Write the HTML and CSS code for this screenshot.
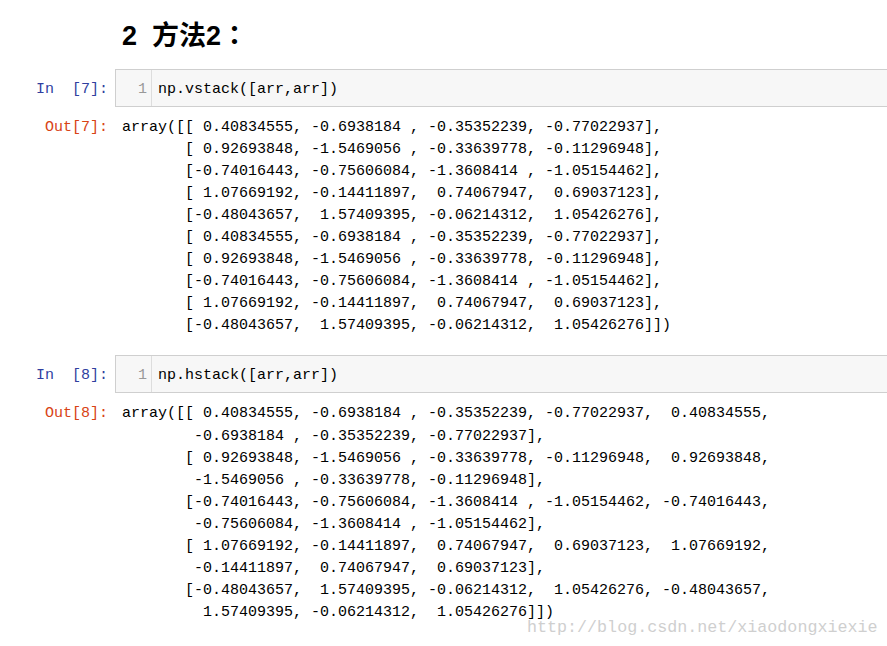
FILE: index.html
```html
<!DOCTYPE html>
<html lang="zh-CN">
<head>
    <meta charset="UTF-8">
    <title>np.vstack / np.hstack</title>
    <link rel="stylesheet" href="styles.css">
</head>
<body>
    <div class="notebook">
        <!-- 标题 -->
        <div class="row">
            <div class="prompt"></div>
            <h2 class="heading"><span class="num">2&nbsp;&nbsp;</span>方法2<span class="colon" lang="ja">：</span></h2>
        </div>

        <!-- In [7] -->
        <div class="row cell-in">
            <div class="prompt prompt-in">In&nbsp;&nbsp;[7]:</div>
            <div class="editor">
                <div class="gutter">1</div>
                <pre class="code">np.vstack([arr,arr])</pre>
            </div>
        </div>
        <div class="row cell-out">
            <div class="prompt prompt-out">Out[7]:</div>
<pre class="output">array([[ 0.40834555, -0.6938184 , -0.35352239, -0.77022937],
       [ 0.92693848, -1.5469056 , -0.33639778, -0.11296948],
       [-0.74016443, -0.75606084, -1.3608414 , -1.05154462],
       [ 1.07669192, -0.14411897,  0.74067947,  0.69037123],
       [-0.48043657,  1.57409395, -0.06214312,  1.05426276],
       [ 0.40834555, -0.6938184 , -0.35352239, -0.77022937],
       [ 0.92693848, -1.5469056 , -0.33639778, -0.11296948],
       [-0.74016443, -0.75606084, -1.3608414 , -1.05154462],
       [ 1.07669192, -0.14411897,  0.74067947,  0.69037123],
       [-0.48043657,  1.57409395, -0.06214312,  1.05426276]])</pre>
        </div>

        <!-- In [8] -->
        <div class="row cell-in second">
            <div class="prompt prompt-in">In&nbsp;&nbsp;[8]:</div>
            <div class="editor">
                <div class="gutter">1</div>
                <pre class="code">np.hstack([arr,arr])</pre>
            </div>
        </div>
        <div class="row cell-out">
            <div class="prompt prompt-out">Out[8]:</div>
<pre class="output">array([[ 0.40834555, -0.6938184 , -0.35352239, -0.77022937,  0.40834555,
        -0.6938184 , -0.35352239, -0.77022937],
       [ 0.92693848, -1.5469056 , -0.33639778, -0.11296948,  0.92693848,
        -1.5469056 , -0.33639778, -0.11296948],
       [-0.74016443, -0.75606084, -1.3608414 , -1.05154462, -0.74016443,
        -0.75606084, -1.3608414 , -1.05154462],
       [ 1.07669192, -0.14411897,  0.74067947,  0.69037123,  1.07669192,
        -0.14411897,  0.74067947,  0.69037123],
       [-0.48043657,  1.57409395, -0.06214312,  1.05426276, -0.48043657,
         1.57409395, -0.06214312,  1.05426276]])</pre>
        </div>
    </div>

    <div class="watermark">http://blog.csdn.net/xiaodongxiexie</div>
</body>
</html>
```

FILE: styles.css
```css
:root {
    --in-color: #303f9f;
    --out-color: #d84315;
    --cell-bg: #f7f7f7;
    --cell-border: #cfcfcf;
}
html, body {
    margin: 0;
    padding: 0;
    background: #fff;
    overflow: hidden;
}
body {
    position: relative;
    width: 887px;
    height: 646px;
}
.notebook {
    width: 920px;
    padding-top: 18px;
}
.row {
    display: flex;
    align-items: flex-start;
}
.prompt {
    flex: 0 0 108px;
    font-family: "Liberation Mono", monospace;
    font-size: 15px;
    line-height: 22px;
    text-align: right;
    white-space: nowrap;
}
.heading {
    margin: 0 0 0 14px;
    font-family: "Liberation Sans", "Noto Sans CJK SC", sans-serif;
    font-size: 27px;
    line-height: 32px;
    font-weight: bold;
    color: #000;
}
.colon {
    font-family: "Noto Sans CJK JP", sans-serif;
}
.cell-in {
    margin-top: 17px;
}
.cell-in.second {
    margin-top: 18px;
}
.prompt-in {
    color: var(--in-color);
    padding-top: 10px;
}
.prompt-out {
    color: var(--out-color);
}
.editor {
    flex: 1;
    display: flex;
    margin-left: 7px;
    background: var(--cell-bg);
    border: 1px solid var(--cell-border);
    border-right: none;
}
.gutter {
    width: 31px;
    padding: 9px 4px 5px 0;
    text-align: right;
    color: #999;
    border-right: 1px solid #ddd;
    font-family: "Liberation Mono", monospace;
    font-size: 15px;
    line-height: 22px;
}
.code {
    margin: 0;
    padding: 9px 0 5px 6px;
    font-family: "Liberation Mono", monospace;
    font-size: 15px;
    line-height: 22px;
    color: #000;
}
.cell-out {
    margin-top: 10px;
}
.output {
    margin: 0 0 0 14px;
    font-family: "Liberation Mono", monospace;
    font-size: 15px;
    line-height: 22.05px;
    color: #000;
}
.watermark {
    position: absolute;
    left: 527px;
    top: 622px;
    font-family: "Liberation Mono", monospace;
    font-size: 16.7px;
    line-height: 11px;
    color: #cfcfcf;
}
```
